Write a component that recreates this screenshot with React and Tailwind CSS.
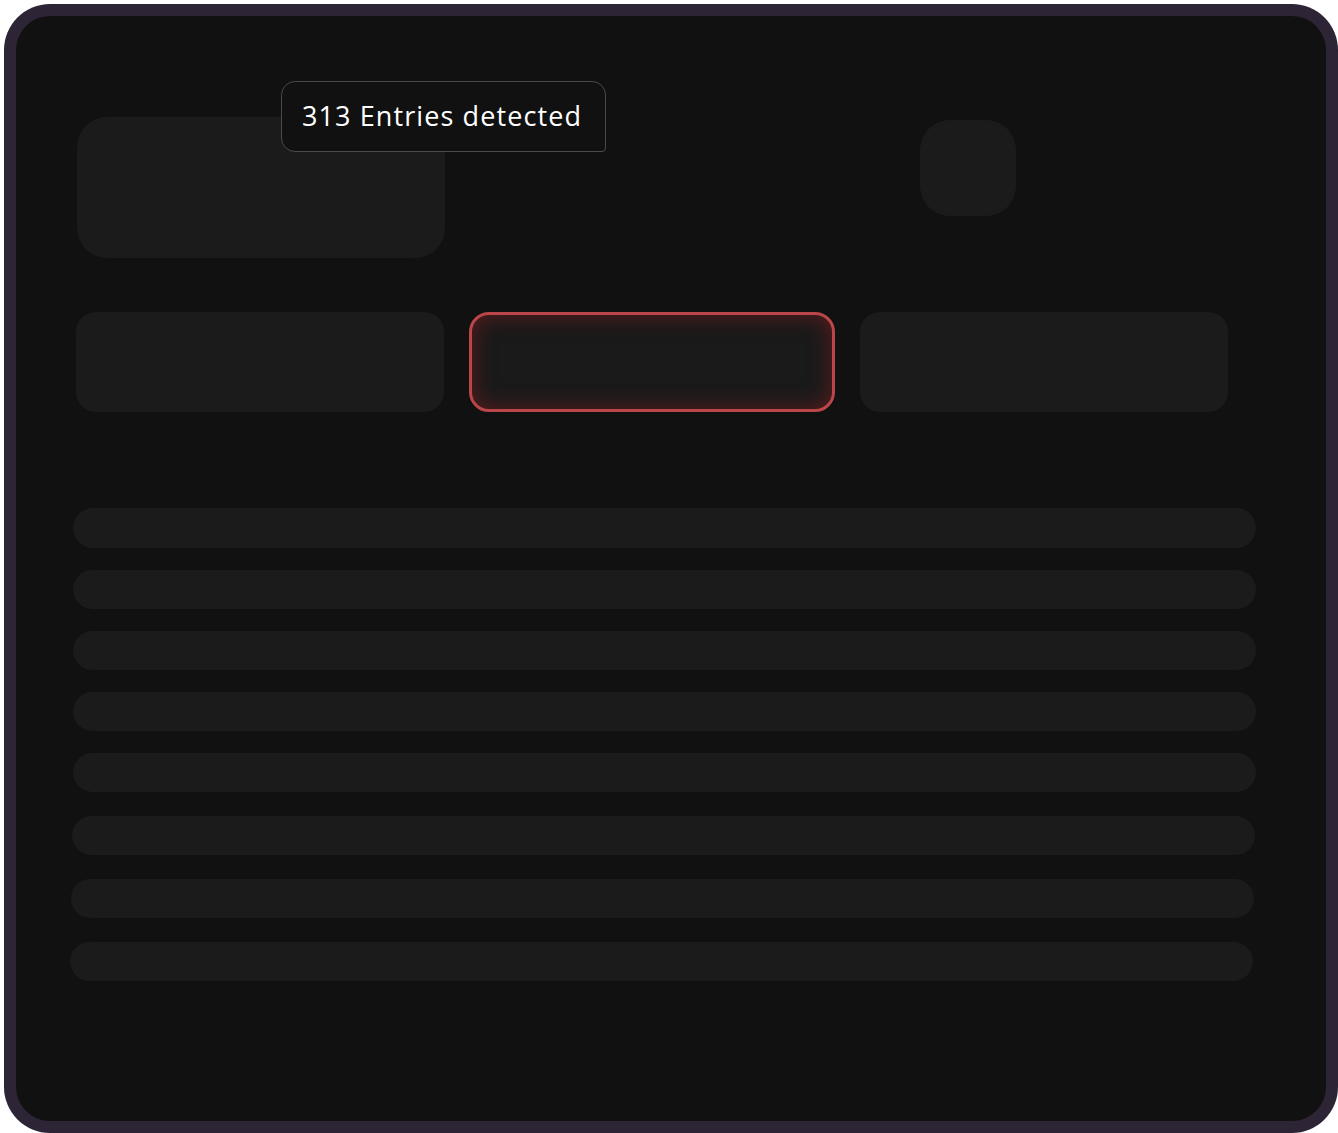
const rows = [
  { left: 57, width: 1183, top: 96, h: 40 },
  { left: 57, width: 1183, top: 22, h: 39 },
  { left: 57, width: 1183, top: 22, h: 39 },
  { left: 57, width: 1183, top: 22, h: 39 },
  { left: 57, width: 1183, top: 22, h: 39 },
  { left: 56, width: 1183, top: 24, h: 39 },
  { left: 55, width: 1183, top: 24, h: 39 },
  { left: 54, width: 1183, top: 24, h: 39 },
];

export default function App() {
  return (
    <div className="min-h-screen bg-white overflow-hidden">
      {/* FRAME */}
      <div className="ml-[4px] mt-[4px] w-[1334px] h-[1129px] rounded-[46px] bg-[#2d2536] p-[12px]">
        <div className="h-full rounded-[34px] bg-[#111111] pt-[101px]">

          {/* TOP ROW */}
          <div className="flex items-start pl-[61px]">
            <div className="relative w-[368px] h-[141px] rounded-[30px] bg-[#1b1b1b]">
              <div
                className="absolute left-[204px] top-[-36px] h-[71px] w-[325px] flex items-center pl-[20px] rounded-tl-[14px] rounded-tr-[14px] rounded-bl-[14px] rounded-br-[4px] border-[1.5px] border-[#4a4a4a] bg-[#111111] text-white text-[27px] tracking-[1.1px]"
                style={{ fontFamily: "'Open Sans', 'Lato', sans-serif" }}
              >
                313 Entries detected
              </div>
            </div>
            <div className="ml-[475px] mt-[3px] w-[96px] h-[96px] rounded-[30px] bg-[#1b1b1b]" />
          </div>

          {/* CARDS */}
          <div className="flex gap-[25px] pl-[60px] mt-[54px]">
            <div className="w-[368px] h-[100px] rounded-[20px] bg-[#1b1b1b]" />
            <div className="w-[366px] h-[100px] rounded-[20px] bg-[#1a1a1a] border-[3px] border-[#bb4649] shadow-[inset_0_0_22px_rgba(150,30,32,0.55)]" />
            <div className="w-[368px] h-[100px] rounded-[20px] bg-[#1b1b1b]" />
          </div>

          {/* LIST */}
          <div className="flex flex-col">
            {rows.map((r, i) => (
              <div
                key={i}
                className="rounded-full bg-[#1b1b1b]"
                style={{ marginLeft: r.left, width: r.width, marginTop: r.top, height: r.h }}
              />
            ))}
          </div>
        </div>
      </div>
    </div>
  );
}
